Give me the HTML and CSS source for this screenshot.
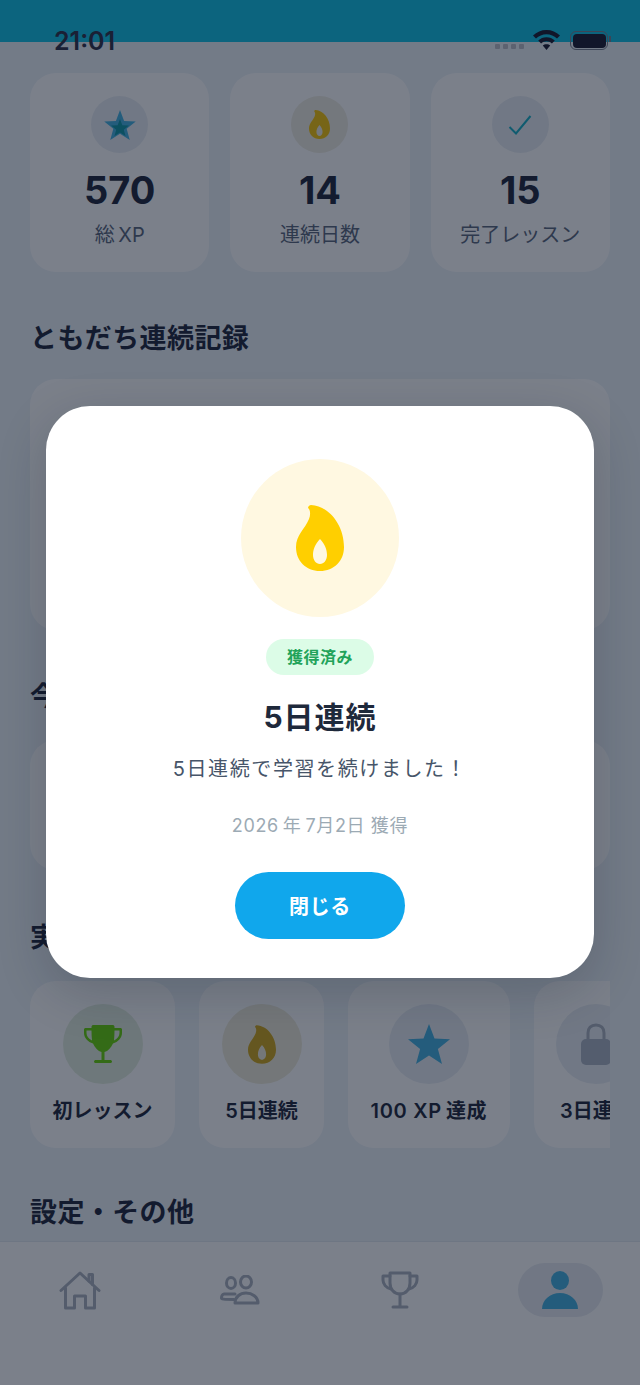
FILE: index.html
```html
<!DOCTYPE html>
<html lang="ja">
<head>
    <meta charset="UTF-8">
    <meta name="viewport" content="width=device-width, initial-scale=1.0">
    <title>プロフィール</title>
    <link rel="stylesheet" href="styles.css">
</head>
<body>
    <svg class="defs" width="0" height="0" aria-hidden="true">
        <symbol id="flame" viewBox="0 0 48 66">
            <path fill-rule="evenodd" d="M15 0C33 1 48 20 48 42C48 56 38 66 24 66C10 66 0 56 0 42C0 30 9 24 13 14C15 9 14 4 12 3C12 1 14 0 15 0ZM24 34C29 39 31 45 31 50C31 55 28 59 24 59C20 59 17 55 17 50C17 45 19 39 24 34Z"/>
        </symbol>
        <symbol id="star" viewBox="0 0 42 40">
            <path d="M21 0L26.5 14.6L42 15.3L29.9 25L34 40L21 31.5L8 40L12.1 25L0 15.3L15.5 14.6Z"/>
        </symbol>
    </svg>

    <div class="phone">
        <div class="topbar"></div>

        <main class="content">
            <!-- Stats -->
            <div class="stats">
                <div class="stat-card">
                    <div class="stat-icon">
                        <svg width="32" height="30"><use href="#star" class="fill-blue"/><use href="#star" class="fill-teal" x="7" y="9" width="18" height="17"/></svg>
                    </div>
                    <div class="stat-value">570</div>
                    <div class="stat-label">総&thinsp;XP</div>
                </div>
                <div class="stat-card">
                    <div class="stat-icon stat-icon-yellow">
                        <svg width="21" height="29" class="fill-yellow"><use href="#flame"/></svg>
                    </div>
                    <div class="stat-value">14</div>
                    <div class="stat-label">連続日数</div>
                </div>
                <div class="stat-card">
                    <div class="stat-icon">
                        <svg width="24" height="20" viewBox="0 0 24 20" fill="none" class="stroke-teal"><path d="M1.5 12L8 18.5L22.5 1"/></svg>
                    </div>
                    <div class="stat-value">15</div>
                    <div class="stat-label">完了レッスン</div>
                </div>
            </div>

            <!-- Friends -->
            <h2 class="section-title">ともだち連続記録</h2>
            <div class="panel panel-friends"></div>

            <!-- Today -->
            <h2 class="section-title section-today">今日の目標</h2>
            <div class="panel panel-today"></div>

            <!-- Achievements -->
            <h2 class="section-title section-badges">実績</h2>
            <div class="badge-row">
                <div class="badge-card">
                    <div class="badge-icon badge-green">
                        <svg width="38" height="38" viewBox="0 0 38 38" class="fill-green">
                            <path fill-rule="evenodd" d="M9 0H29C30 0 30.5 1 30.500 2V3H37L38 4V8C38 13 34 17 29 18.500C27 23 24 26 20.500 27V35H26C27 35 28 35.500 28 36.500C28 37.500 27 38 26 38H12C11 38 10 37.500 10 36.500C10 35.500 11 35 12 35H17.500V27C14 26 11 23 9 18.500C4 17 0 13 0 8V4L1 3H7.500V2C7.500 1 8 0 9 0ZM7.500 5.500H2.500V8C2.500 11 4.500 14 8 15.500C7.700 12 7.500 9 7.500 5.500ZM30.500 5.500C30.500 9 30.300 12 30 15.500C33.500 14 35.500 11 35.500 8V5.500Z"/>
                        </svg>
                    </div>
                    <div class="badge-label">初レッスン</div>
                </div>
                <div class="badge-card">
                    <div class="badge-icon badge-yellow">
                        <svg width="28" height="39" class="fill-yellow-dim"><use href="#flame"/></svg>
                    </div>
                    <div class="badge-label">5日連続</div>
                </div>
                <div class="badge-card">
                    <div class="badge-icon">
                        <svg width="42" height="40" class="fill-blue"><use href="#star"/></svg>
                    </div>
                    <div class="badge-label badge-label-wide">100 XP&thinsp;達成</div>
                </div>
                <div class="badge-card">
                    <div class="badge-icon">
                        <svg width="30" height="42" viewBox="0 0 30 42">
                            <path class="lock-arc" d="M7 18V10C7 5 10 2 15 2C20 2 23 5 23 10V18" fill="none"/>
                            <rect class="lock-body" x="0" y="16" width="30" height="26" rx="5"/>
                        </svg>
                    </div>
                    <div class="badge-label">3日連続</div>
                </div>
            </div>

            <!-- Settings -->
            <h2 class="section-title section-settings">設定・その他</h2>
        </main>

        <!-- Tab bar -->
        <nav class="tabbar">
            <div class="tab">
                <svg width="42" height="39" viewBox="0 0 42 39" fill="none" class="stroke-gray">
                    <path d="M2 19.500L21 2L40 19.500"/>
                    <path d="M30 10V3.500H33.500V13.500"/>
                    <path d="M6.500 17V37H15.500V25H26.500V37H35.500V17"/>
                </svg>
            </div>
            <div class="tab">
                <svg width="40" height="30" viewBox="0 0 40 30" fill="none" class="stroke-gray">
                    <ellipse cx="11" cy="8" rx="4.500" ry="5.500"/>
                    <ellipse cx="26" cy="7" rx="5.500" ry="6"/>
                    <path d="M15 19H4C2 19 1.500 22 1.500 23C1.500 24 3 24.500 14 24.500"/>
                    <path d="M15 28C15 22 20 18 26 18C32 18 38 22 38 28H15Z"/>
                </svg>
            </div>
            <div class="tab">
                <svg width="38" height="38" viewBox="0 0 38 38" fill="none" class="stroke-gray">
                    <path d="M9 2H29V12C29 18 25 23 19 23C13 23 9 18 9 12V2Z"/>
                    <path d="M9 5H2V9C2 13 5 17 10 18"/>
                    <path d="M29 5H36V9C36 13 33 17 28 18"/>
                    <path d="M19 23V36M12 36H26"/>
                </svg>
            </div>
            <div class="tab tab-active">
                <svg width="36" height="38" viewBox="0 0 36 38" class="fill-blue">
                    <ellipse cx="18" cy="9.500" rx="9" ry="9.500"/>
                    <path d="M0 38C0 29 8 22 18 22C28 22 36 29 36 38Z"/>
                </svg>
            </div>
        </nav>

        <div class="overlay">
            <!-- Modal -->
            <div class="modal">
                <div class="modal-icon">
                    <svg width="48" height="66" class="fill-flame"><use href="#flame"/></svg>
                </div>
                <div class="pill">獲得済み</div>
                <h3 class="modal-title">5日連続</h3>
                <p class="modal-desc">5日連続で学習を続けました！</p>
                <p class="modal-date">2026&thinsp;年&thinsp;7月2日 獲得</p>
                <button class="close-btn">閉じる</button>
            </div>
        </div>

        <!-- Status bar -->
        <div class="statusbar">
            <span class="time">21:01</span>
            <div class="dots"><i></i><i></i><i></i><i></i></div>
            <svg class="wifi" width="27" height="20" viewBox="0 0 27 20">
                <path d="M13.500 0C18.700 0 23.300 2 27 5.500L24 8.500C21.200 5.800 17.500 4.200 13.500 4.200C9.500 4.200 5.800 5.800 3 8.500L0 5.500C3.700 2 8.300 0 13.500 0Z"/>
                <path d="M13.500 7.200C16.700 7.200 19.500 8.400 21.800 10.500L18.900 13.400C17.400 12.100 15.500 11.300 13.500 11.300C11.500 11.300 9.600 12.100 8.100 13.400L5.200 10.500C7.500 8.400 10.300 7.200 13.500 7.200Z"/>
                <path d="M13.500 14.200C15 14.200 16.200 14.700 17.200 15.600L13.500 20L9.800 15.600C10.800 14.700 12 14.200 13.500 14.200Z"/>
            </svg>
            <div class="battery"><div class="battery-fill"></div></div>
        </div>
    </div>
</body>
</html>
```

FILE: styles.css
```css
* {
    box-sizing: border-box;
}
body {
    font-family: Inter, "Noto Sans CJK JP", sans-serif;
    background-color: #edf3f9;
    color: #1a1f36;
    margin: 0;
    padding: 0;
}
.defs {
    position: absolute;
}
.phone {
    position: relative;
    width: 640px;
    height: 1385px;
    overflow: hidden;
}
.topbar {
    height: 42px;
    background-color: #0ac0e4;
}
.content {
    padding: 31px 30px 0;
}

/* icon colours */
.fill-blue { fill: #3fb0e0; }
.fill-teal { fill: #0a94a4; }
.fill-yellow { fill: #f5c400; }
.fill-yellow-dim { fill: #cfa414; }
.fill-flame { fill: #ffcf00; }
.fill-green { fill: #62d000; }
.stroke-teal {
    stroke: #12aec4;
    stroke-width: 2;
}
.stroke-gray {
    stroke: #a8b0bc;
    stroke-width: 3;
    stroke-linecap: round;
    stroke-linejoin: round;
}

/* stats */
.stats {
    display: grid;
    grid-template-columns: repeat(3, 1fr);
    gap: 21px;
}
.stat-card {
    height: 199px;
    padding-top: 23px;
    background-color: #fff;
    border-radius: 26px;
    text-align: center;
}
.stat-icon {
    display: flex;
    align-items: center;
    justify-content: center;
    width: 57px;
    height: 57px;
    margin: 0 auto;
    border-radius: 50%;
    background-color: #e9eef4;
}
.stat-icon-yellow {
    background-color: #f0ede2;
}
.stat-value {
    margin-top: 14px;
    font-size: 38px;
    font-weight: 700;
    line-height: 46px;
}
.stat-label {
    margin-top: 7px;
    font-size: 20px;
    line-height: 30px;
    color: #566378;
}

/* sections */
.section-title {
    margin: 48px 0 21px;
    font-size: 27px;
    font-weight: 700;
    letter-spacing: 0.4px;
    line-height: 38px;
}
.section-today {
    margin: 48px 0 24px;
}
.section-badges {
    margin: 49px 0 24px;
}
.section-settings {
    margin: 46px 0 0;
}
.panel {
    background-color: #fff;
    border-radius: 26px;
}
.panel-friends {
    height: 251px;
}
.panel-today {
    height: 130px;
}

/* achievements */
.badge-row {
    display: flex;
    gap: 24px;
    overflow: hidden;
}
.badge-card {
    flex: none;
    height: 167px;
    padding: 23px 22.5px 0;
    background-color: #fff;
    border-radius: 26px;
    text-align: center;
}
.badge-icon {
    display: flex;
    align-items: center;
    justify-content: center;
    width: 80px;
    height: 80px;
    margin: 0 auto 13px;
    border-radius: 50%;
    background-color: #e9eef4;
}
.badge-green {
    background-color: #e3eedd;
}
.badge-yellow {
    background-color: #efecda;
}
.badge-label {
    font-size: 20px;
    font-weight: 600;
    line-height: 28px;
    white-space: nowrap;
}
.badge-label-wide {
    letter-spacing: 0.7px;
}
.lock-arc {
    stroke: #a8b0bc;
    stroke-width: 3;
}
.lock-body {
    fill: #a8b2c2;
}

/* tab bar */
.tabbar {
    position: absolute;
    left: 0;
    right: 0;
    top: 1241px;
    bottom: 0;
    display: grid;
    grid-template-columns: repeat(4, 1fr);
    align-items: start;
    padding-top: 21px;
    background-color: #fff;
    border-top: 1px solid #e2e8f0;
}
.tab {
    display: flex;
    align-items: center;
    justify-content: center;
    height: 54px;
}
.tab-active {
    width: 85px;
    margin: 0 auto;
    border-radius: 27px;
    background-color: #e8ecf1;
}

/* modal */
.overlay {
    position: absolute;
    inset: 0;
    display: flex;
    align-items: center;
    justify-content: center;
    padding-bottom: 1px;
    background-color: rgba(15, 23, 42, 0.55);
}
.modal {
    display: flex;
    flex-direction: column;
    align-items: center;
    width: 548px;
    height: 572px;
    padding-top: 53px;
    background-color: #fff;
    border-radius: 44px;
    box-shadow: 0 14px 50px rgba(15, 23, 42, 0.2);
}
.modal-icon {
    display: flex;
    align-items: center;
    justify-content: center;
    width: 158px;
    height: 158px;
    border-radius: 50%;
    background-color: #fff8e1;
}
.pill {
    margin-top: 22px;
    padding: 0 21px;
    height: 36px;
    border-radius: 18px;
    background-color: #dcfce7;
    color: #22a35a;
    font-size: 16px;
    font-weight: 700;
    letter-spacing: 0.5px;
    line-height: 36px;
}
.modal-title {
    margin: 20px 0 0;
    font-size: 30px;
    font-weight: 700;
    letter-spacing: 1px;
    line-height: 44px;
    color: #1e293b;
}
.modal-desc {
    margin: 15px 0 0;
    font-size: 20px;
    letter-spacing: 1.6px;
    line-height: 30px;
    color: #475569;
}
.modal-date {
    margin: 29px 0 0;
    font-size: 18px;
    letter-spacing: 0.65px;
    line-height: 26px;
    color: #9caab4;
}
.close-btn {
    width: 170px;
    height: 67px;
    margin-top: 33px;
    border: none;
    border-radius: 34px;
    background-color: #10a7ec;
    color: #fff;
    font-family: inherit;
    font-size: 20px;
    font-weight: 600;
    letter-spacing: 0.7px;
}

/* status bar */
.statusbar {
    position: absolute;
    top: 28px;
    left: 54px;
    right: 32px;
    display: flex;
    align-items: flex-start;
}
.time {
    font-size: 25px;
    font-weight: 600;
    line-height: 26px;
    color: #1a2035;
}
.dots {
    display: flex;
    gap: 3px;
    margin: 16px 0 0 auto;
}
.dots i {
    width: 5px;
    height: 5px;
    border-radius: 1px;
    background-color: #5c6270;
}
.wifi {
    margin: 2px 10px 0 9px;
    fill: #11162a;
}
.battery {
    position: relative;
    width: 38px;
    height: 19px;
    margin-top: 3px;
    padding: 1.5px;
    border: 1.5px solid #3d4556;
    border-radius: 6px;
}
.battery::after {
    content: "";
    position: absolute;
    top: 4px;
    right: -4px;
    width: 2px;
    height: 6px;
    background-color: #3d4556;
}
.battery-fill {
    height: 100%;
    border-radius: 4px;
    background-color: #11162a;
}
```
